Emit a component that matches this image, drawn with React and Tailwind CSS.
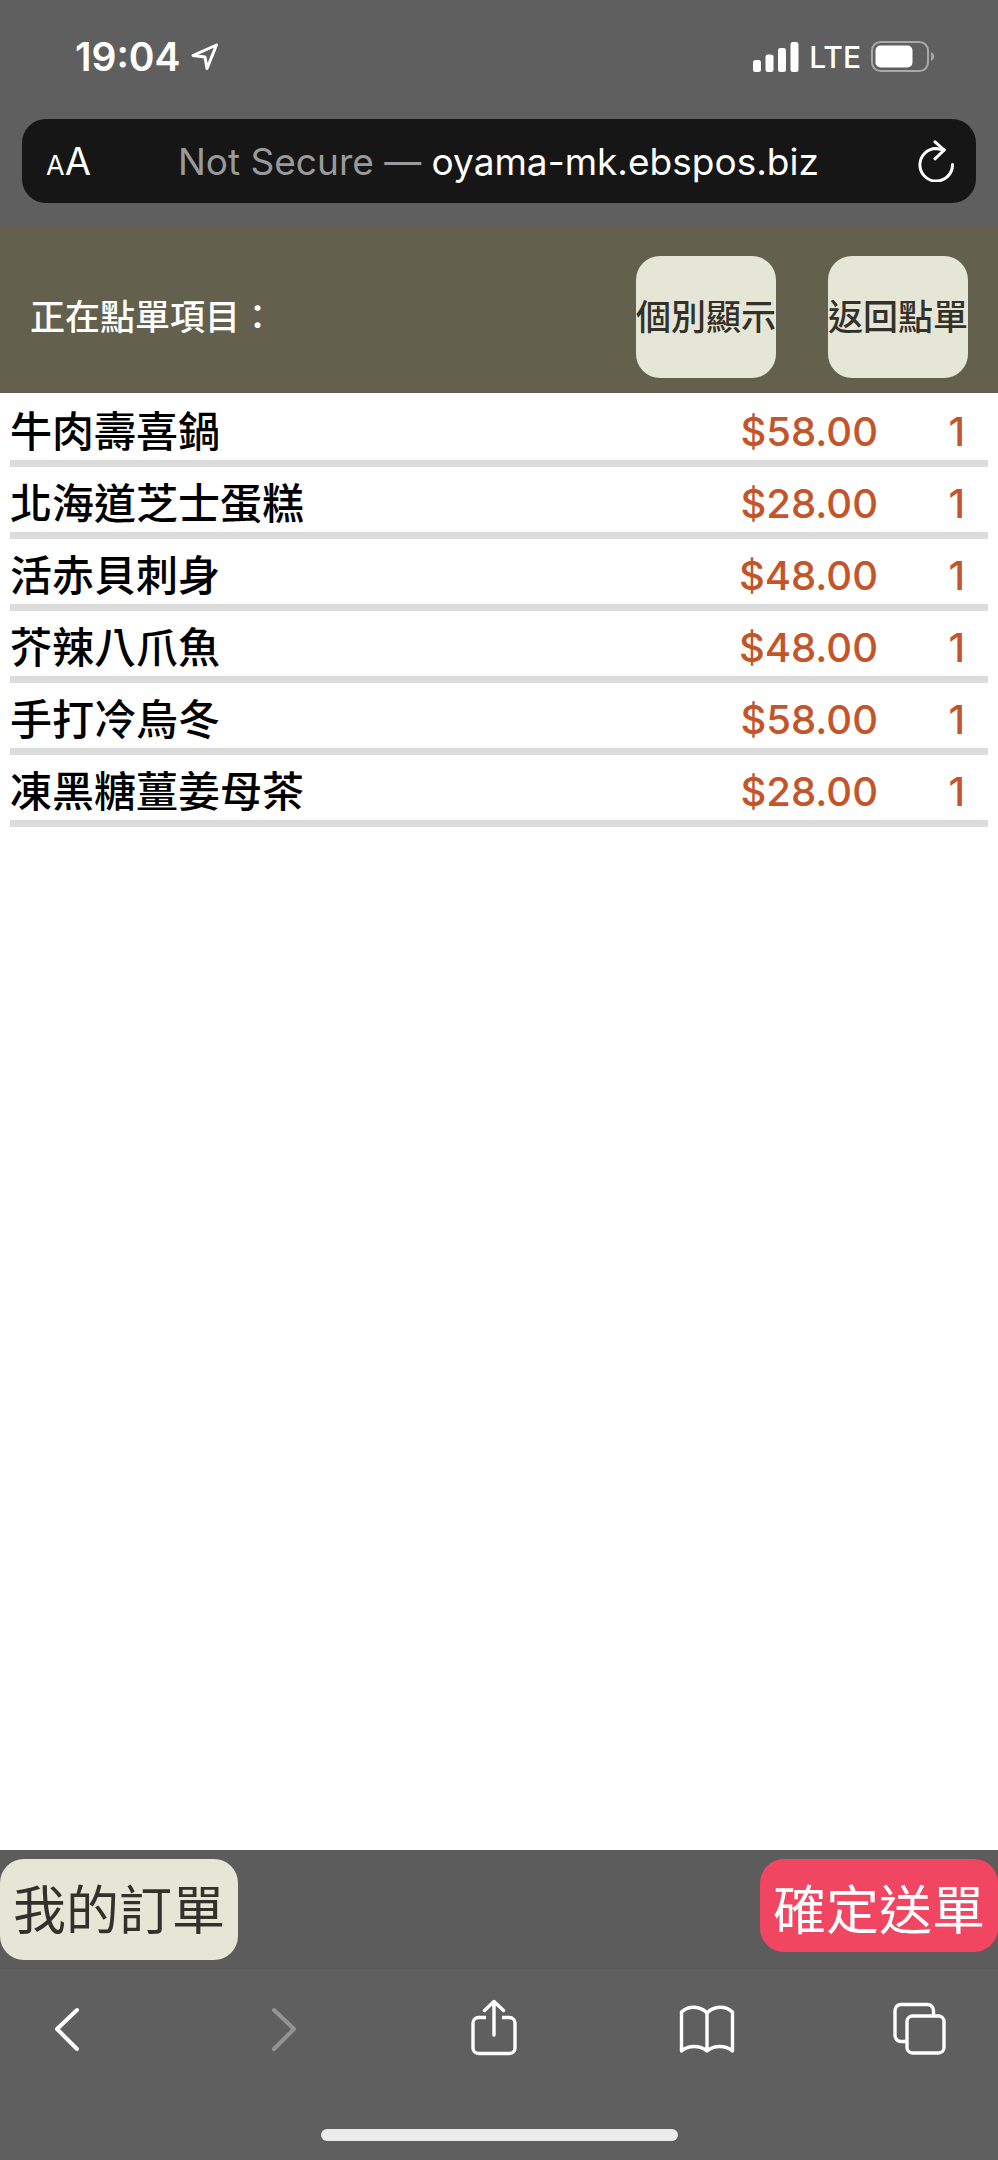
const orderItems = [
    { name: '牛肉壽喜鍋', price: 58, quantity: 1 },
    { name: '北海道芝士蛋糕', price: 28, quantity: 1 },
    { name: '活赤貝刺身', price: 48, quantity: 1 },
    { name: '芥辣八爪魚', price: 48, quantity: 1 },
    { name: '手打冷烏冬', price: 58, quantity: 1 },
    { name: '凍黑糖薑姜母茶', price: 28, quantity: 1 },
];

const formatPrice = (price) => `$${price.toFixed(2)}`;

const StatusBar = () => (
    <div className="flex h-[119px] items-center justify-between pl-[75px] pr-[63px] pb-[6px] text-white">
        <div className="flex items-center gap-[10px]">
            <span className="text-[39px] leading-none font-semibold">19:04</span>
            <svg className="h-7 w-7" viewBox="0 0 28 28" fill="none" stroke="currentColor" strokeWidth="3" strokeLinejoin="round" aria-hidden="true">
                <path d="M25.5 2 L2 12.5 L14 14 L16 25.5 Z" />
            </svg>
        </div>
        <div className="flex items-center gap-[10px]">
            <svg className="h-[30px] w-[46px]" viewBox="0 0 46 30" fill="currentColor" aria-hidden="true">
                <rect x="0" y="18" width="8" height="12" rx="2.5" />
                <rect x="12.5" y="12.5" width="8" height="17.5" rx="2.5" />
                <rect x="25" y="6" width="8" height="24" rx="2.5" />
                <rect x="37.5" y="0" width="8" height="30" rx="2.5" />
            </svg>
            <span className="text-[30px] leading-none font-medium">LTE</span>
            <svg className="h-[31px] w-[64px]" viewBox="0 0 64 31" fill="none" aria-hidden="true">
                <rect x="1" y="1" width="56" height="29" rx="8.5" stroke="#a8a8a8" strokeWidth="2" />
                <rect x="4.5" y="4.5" width="37" height="22" rx="5" fill="#ffffff" />
                <path d="M60 11 C64.2 13 64.2 18 60 20 Z" fill="#a8a8a8" />
            </svg>
        </div>
    </div>
);

const AddressBar = () => (
    <div className="mx-[22px] flex h-[84px] items-center rounded-3xl bg-[#161616] pl-6 pr-[22px] text-white">
        <button type="button" aria-label="Text size" className="flex items-baseline">
            <span className="text-[27px] leading-none">A</span>
            <span className="text-[38px] leading-none">A</span>
        </button>
        <p className="flex-1 pr-3 text-center whitespace-nowrap text-[37px] leading-none">
            <span className="text-[#9a9a9a]">Not Secure — </span>
            oyama-mk.ebspos.biz
        </p>
        <button type="button" aria-label="Reload">
            <svg className="h-[42px] w-9" viewBox="0 0 36 42" fill="none" stroke="currentColor" strokeWidth="3" strokeLinecap="round" strokeLinejoin="round" aria-hidden="true">
                <path d="M34.5 24.5 A16.3 16.3 0 1 1 18 8.5 L26 10" />
                <path d="M17 1.8 L26.2 10 L17 18.8" />
            </svg>
        </button>
    </div>
);

const PageHeader = () => (
    <header className="flex h-[166px] items-center justify-between bg-[#63614d] px-[30px] pt-[14px] text-[35px] leading-none font-medium">
        <h1 className="whitespace-nowrap text-white">正在點單項目：</h1>
        <div className="flex gap-[52px] text-[#32312b]">
            <button type="button" className="h-[122px] w-[140px] whitespace-nowrap rounded-3xl bg-[#e6e6d6]">個別顯示</button>
            <button type="button" className="h-[122px] w-[140px] whitespace-nowrap rounded-3xl bg-[#e6e6d6]">返回點單</button>
        </div>
    </header>
);

const OrderTable = () => (
    <table className="w-full border-separate border-spacing-0 text-[42px] leading-none font-medium">
        <tbody>
            {orderItems.map((item) => (
                <tr key={item.name} className="h-[72px]">
                    <td className="border-b-[7px] border-[#dcdcdc] pt-2 text-left text-black">{item.name}</td>
                    <td className="border-b-[7px] border-[#dcdcdc] pt-2 text-right text-[40px] text-[#c4552b]">{formatPrice(item.price)}</td>
                    <td className="w-[110px] border-b-[7px] border-[#dcdcdc] pt-2 pr-[23px] text-right text-[40px] text-[#c4552b]">{item.quantity}</td>
                </tr>
            ))}
        </tbody>
    </table>
);

const OrderActions = () => (
    <div className="flex h-[119px] items-start justify-between bg-[#5c5c5c] pt-[9px] text-[53px] leading-none">
        <button type="button" className="h-[101px] w-[238px] whitespace-nowrap rounded-3xl bg-[#e6e6d6] pt-1 text-[#32312b]">我的訂單</button>
        <button type="button" className="h-[93px] w-[238px] whitespace-nowrap rounded-3xl bg-[#f04661] pt-3 text-white">確定送單</button>
    </div>
);

const BrowserToolbar = () => (
    <nav className="flex h-[119px] items-center justify-between bg-[#5f5f5f] pl-[39px] pr-[50px] text-white" aria-label="Browser">
        <button type="button" aria-label="Back" className="flex w-14 justify-center">
            <svg className="h-[60px] w-7" viewBox="0 0 28 60" fill="none" stroke="currentColor" strokeWidth="4" strokeLinecap="round" strokeLinejoin="round" aria-hidden="true">
                <path d="M24 11 L4 30 L24 50" />
            </svg>
        </button>
        <button type="button" aria-label="Forward" className="flex w-14 justify-center text-[#949494]">
            <svg className="h-[60px] w-9" viewBox="0 0 36 60" fill="none" stroke="currentColor" strokeWidth="4" strokeLinecap="round" strokeLinejoin="round" aria-hidden="true">
                <path d="M12 11 L32 30 L12 50" />
            </svg>
        </button>
        <button type="button" aria-label="Share" className="flex w-14 justify-center">
            <svg className="h-[60px] w-[46px]" viewBox="0 0 46 60" fill="none" stroke="currentColor" strokeWidth="3.4" strokeLinecap="round" strokeLinejoin="round" aria-hidden="true">
                <path strokeLinecap="butt" d="M15 18.5 H7.5 A5.5 5.5 0 0 0 2 24 V49 A5.5 5.5 0 0 0 7.5 54.5 H38.5 A5.5 5.5 0 0 0 44 49 V24 A5.5 5.5 0 0 0 38.5 18.5 H31" />
                <path d="M23 36 V2.5 M13.5 11.5 L23 2.5 L32.5 11.5" />
            </svg>
        </button>
        <button type="button" aria-label="Bookmarks" className="flex w-14 justify-center">
            <svg className="h-[60px] w-14" viewBox="0 0 56 60" fill="none" stroke="currentColor" strokeWidth="3.4" strokeLinecap="round" strokeLinejoin="round" aria-hidden="true">
                <path d="M28 14 C21 6.5 9.5 6.5 2.5 13 V52 C9.5 46 21 46 28 52 C35 46 46.5 46 53.5 52 V13 C46.5 6.5 35 6.5 28 14 Z M28 14 V52" />
            </svg>
        </button>
        <button type="button" aria-label="Tabs" className="flex w-14 justify-center">
            <svg className="h-[60px] w-[54px]" viewBox="0 0 54 60" fill="none" stroke="currentColor" strokeWidth="3.4" strokeLinejoin="round" aria-hidden="true">
                <path d="M14 42.5 H8 A6 6 0 0 1 2 36.5 V11.5 A6 6 0 0 1 8 5.5 H34.5 A6 6 0 0 1 40.5 11.5 V17" />
                <rect x="14" y="17" width="37" height="37" rx="5.5" />
            </svg>
        </button>
    </nav>
);

const App = () => {
    return (
        <div className="flex min-h-screen flex-col bg-white font-['Inter','Noto_Sans_CJK_TC',sans-serif]">
            <div className="h-[227px] bg-[#5f5f5f]">
                <StatusBar />
                <AddressBar />
            </div>
            <PageHeader />
            <main className="flex-1 px-[10px] pt-[2px]">
                <OrderTable />
            </main>
            <footer>
                <OrderActions />
                <BrowserToolbar />
                <div className="flex h-[72px] justify-center bg-[#5f5f5f] pt-[41px]">
                    <div className="h-3 w-[357px] rounded-full bg-[#ebebeb]"></div>
                </div>
            </footer>
        </div>
    );
};

export default App;
